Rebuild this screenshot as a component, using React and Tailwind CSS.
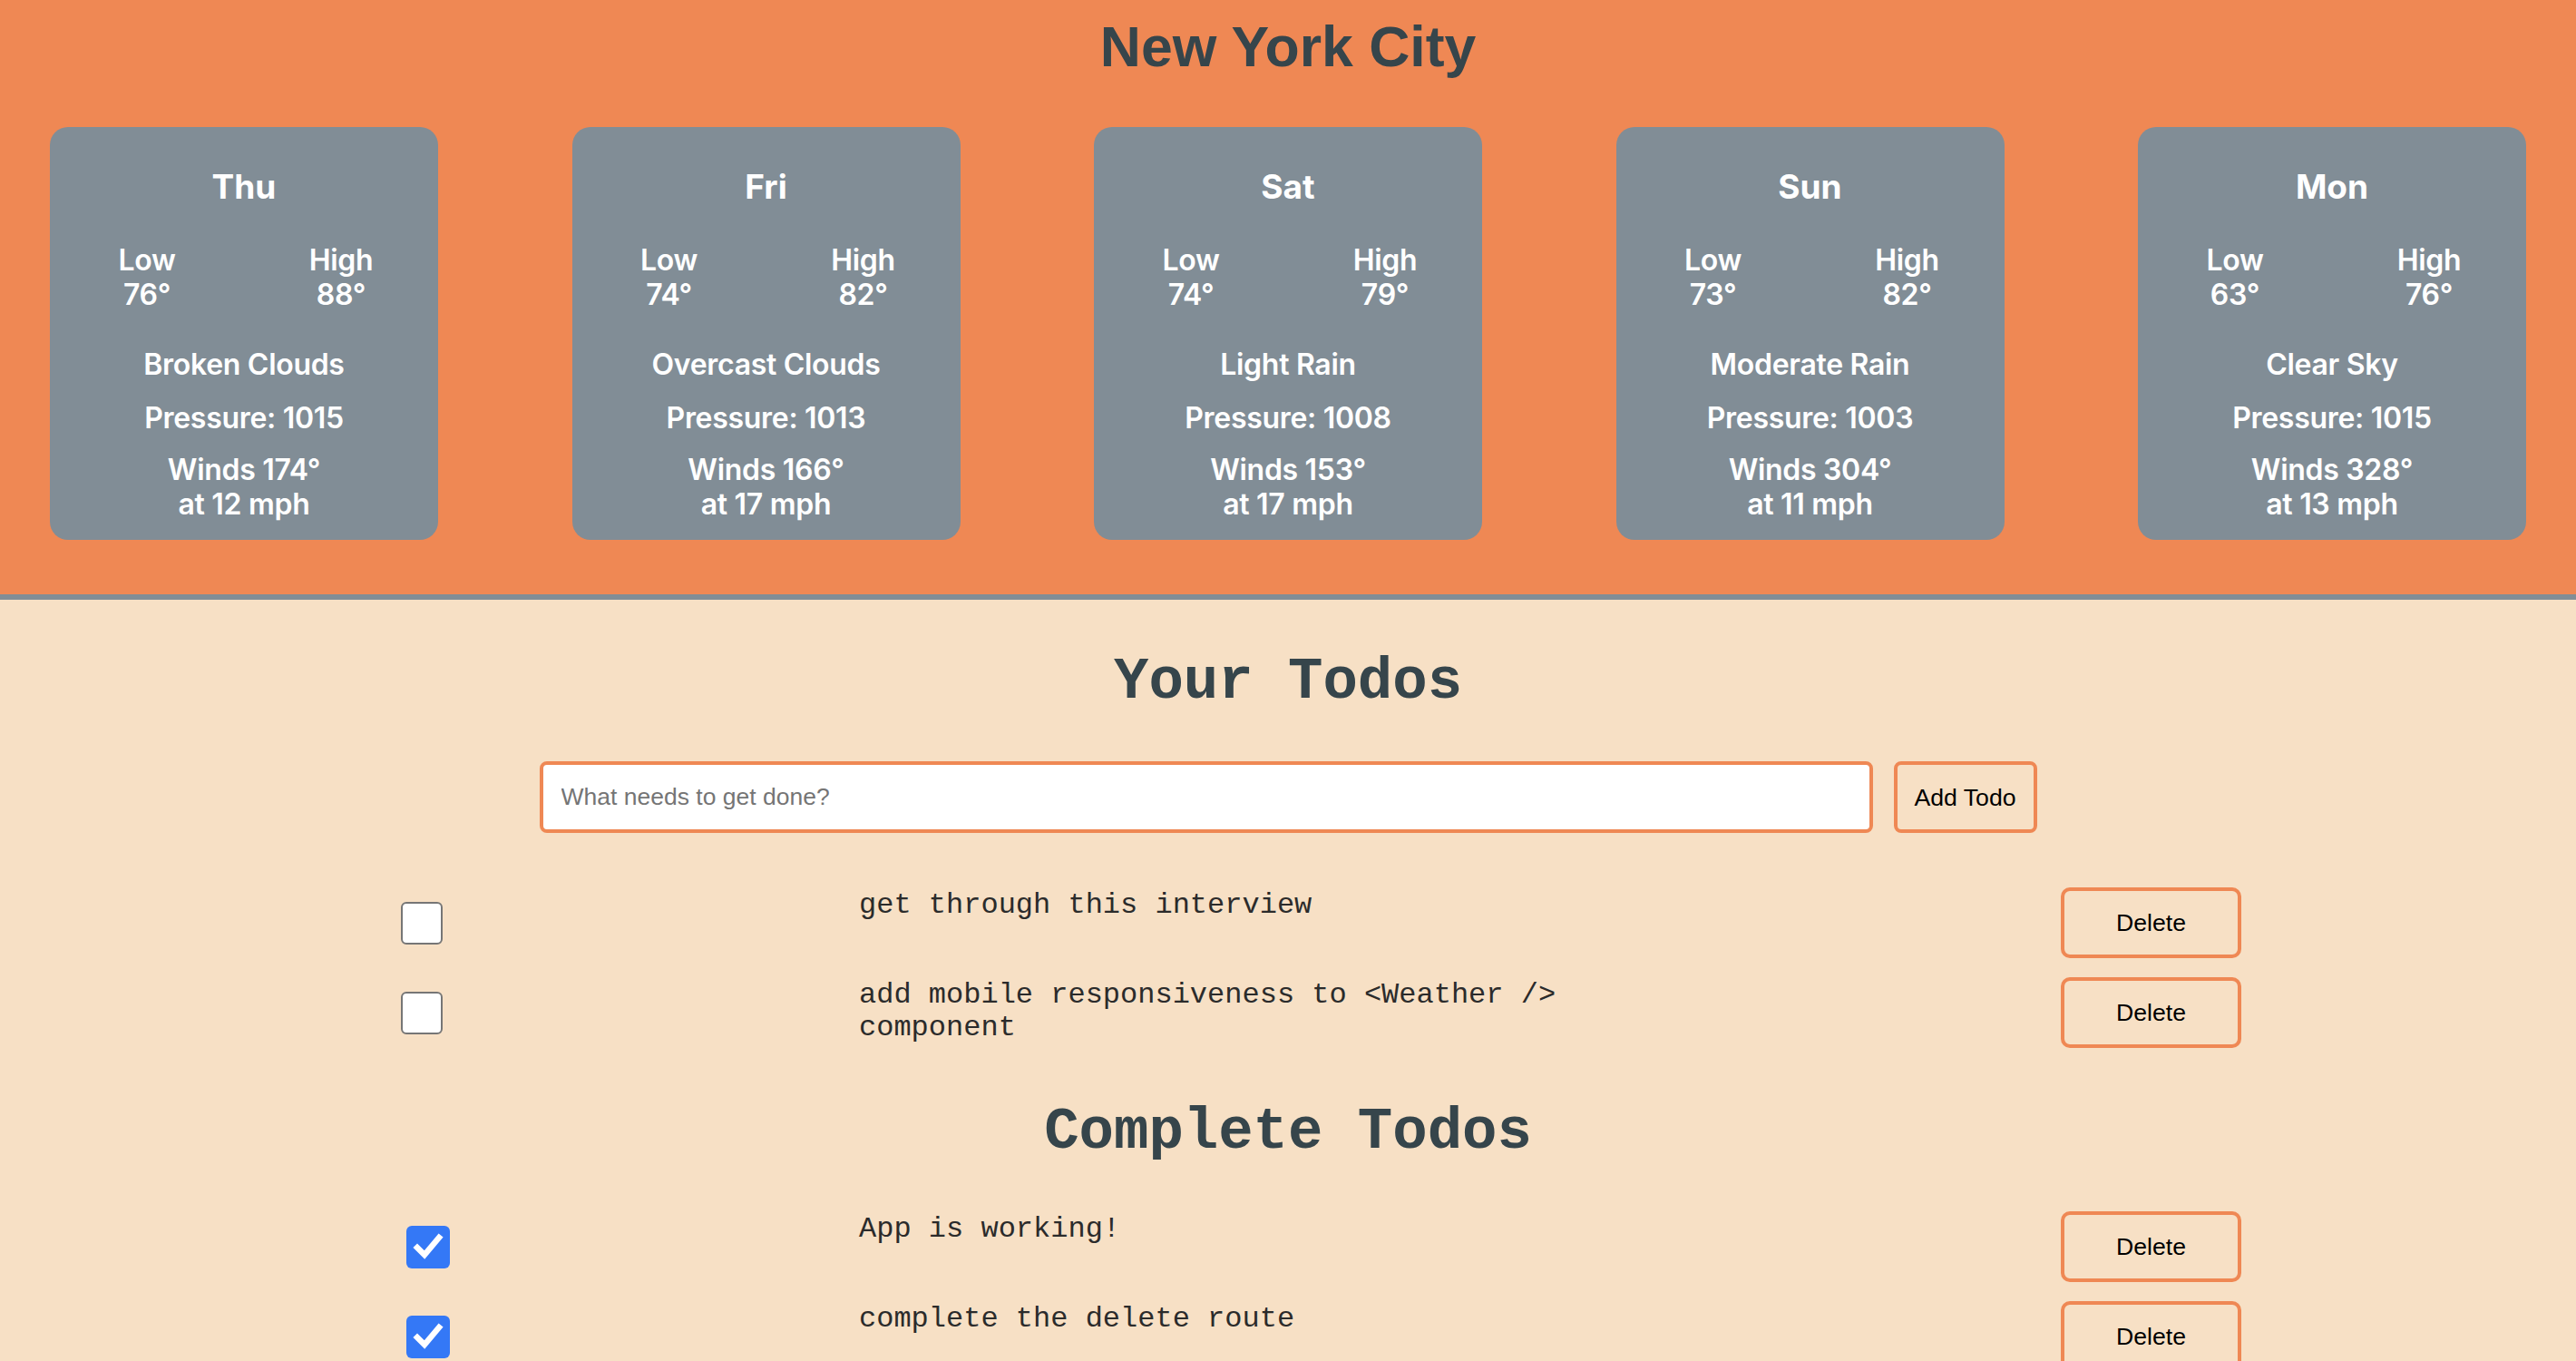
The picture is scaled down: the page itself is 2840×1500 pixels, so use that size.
import React from "react";

const days = [
  { day: "Thu", low: 76, high: 88, desc: "Broken Clouds", pressure: 1015, deg: 174, speed: 12 },
  { day: "Fri", low: 74, high: 82, desc: "Overcast Clouds", pressure: 1013, deg: 166, speed: 17 },
  { day: "Sat", low: 74, high: 79, desc: "Light Rain", pressure: 1008, deg: 153, speed: 17 },
  { day: "Sun", low: 73, high: 82, desc: "Moderate Rain", pressure: 1003, deg: 304, speed: 11 },
  { day: "Mon", low: 63, high: 76, desc: "Clear Sky", pressure: 1015, deg: 328, speed: 13 },
];

function Card({ d }) {
  return (
    <div className="w-[428px] h-[455px] rounded-[20px] bg-[#818d96] text-white text-center pt-[44px] font-['Inter',sans-serif]">
      <div className="text-[37px] leading-[44px] font-bold">{d.day}</div>
      <div className="grid grid-cols-2 mt-[40px] text-[32px] leading-[38px] font-semibold tracking-[-0.3px]">
        <div>
          <div>Low</div>
          <div>{d.low}°</div>
        </div>
        <div>
          <div>High</div>
          <div>{d.high}°</div>
        </div>
      </div>
      <div className="mt-[39px] text-[32px] leading-[38px] font-semibold tracking-[-0.3px]">{d.desc}</div>
      <div className="mt-[21px] text-[32px] leading-[38px] font-semibold tracking-[-0.3px]">Pressure: {d.pressure}</div>
      <div className="mt-[19px] text-[32px] leading-[38px] font-semibold tracking-[-0.3px]">
        <div>Winds {d.deg}°</div>
        <div>at {d.speed} mph</div>
      </div>
    </div>
  );
}

function CheckBox({ checked }) {
  if (checked) {
    return (
      <div className="w-[48px] h-[47px] rounded-[6px] bg-[#3478f6] flex items-center justify-center">
        <svg width="34" height="34" viewBox="0 0 34 34">
          <path d="M5 18 L13 26 L29 7" fill="none" stroke="white" strokeWidth="6.5" strokeLinecap="square" strokeLinejoin="miter" />
        </svg>
      </div>
    );
  }
  return <div className="w-[46px] h-[47px] rounded-[6px] bg-white border-2 border-[#767676]" />;
}

function TodoRow({ text, checked }) {
  return (
    <div className="flex items-start">
      <div className={checked ? "w-[944px] h-[78px] flex items-center justify-center" : "w-[930px] h-[78px] flex items-center justify-center"}>
        <CheckBox checked={checked} />
      </div>
      <div className={checked ? "w-[928px] pl-[3px] pt-[2px] text-[32px] leading-[36px] text-[#2b2b2b] font-['Liberation_Mono',monospace]" : "w-[942px] pl-[17px] pt-[2px] text-[32px] leading-[36px] text-[#2b2b2b] font-['Liberation_Mono',monospace]"}>
        {text}
      </div>
      <button className="ml-[400px] w-[199px] h-[78px] rounded-[10px] border-4 border-[#ef8854] bg-transparent text-[26.67px] text-black font-['Liberation_Sans',sans-serif]">
        Delete
      </button>
    </div>
  );
}

export default function App() {
  return (
    <div className="min-h-screen bg-[#f7e0c5] w-[2840px]">
      <header className="bg-[#ef8854] pt-[20px] pb-[60px] border-b-[6px] border-[#818d96]">
        <h1 className="text-center text-[62.5px] leading-[62px] font-bold text-[#36454b] font-['Liberation_Sans',sans-serif]">
          New York City
        </h1>
        <div className="mt-[58px] px-[55px] flex justify-between">
          {days.map((d) => (
            <Card key={d.day} d={d} />
          ))}
        </div>
      </header>
      <main>
        <h2 className="mt-[55px] text-center text-[64px] leading-[72px] font-bold text-[#36454b] font-['Liberation_Mono',monospace]">
          Your Todos
        </h2>
        <div className="mt-[51px] flex justify-center gap-[23px]">
          <input
            className="w-[1470px] h-[79px] rounded-[8px] border-4 border-[#ef8854] bg-white px-[20px] text-[26.5px] text-black placeholder:text-[#757575] font-['Liberation_Sans',sans-serif] outline-none"
            placeholder="What needs to get done?"
          />
          <button className="w-[158px] h-[79px] rounded-[8px] border-4 border-[#ef8854] bg-transparent text-[26.67px] text-black font-['Liberation_Sans',sans-serif]">
            Add Todo
          </button>
        </div>
        <div className="mt-[60px] flex flex-col gap-[21px]">
          <TodoRow text="get through this interview" />
          <TodoRow text="add mobile responsiveness to <Weather /> component" />
        </div>
        <h2 className="mt-[57px] text-center text-[64px] leading-[72px] font-bold text-[#36454b] font-['Liberation_Mono',monospace]">
          Complete Todos
        </h2>
        <div className="mt-[51px] flex flex-col gap-[21px] pb-[40px]">
          <TodoRow text="App is working!" checked />
          <TodoRow text="complete the delete route" checked />
        </div>
      </main>
    </div>
  );
}
